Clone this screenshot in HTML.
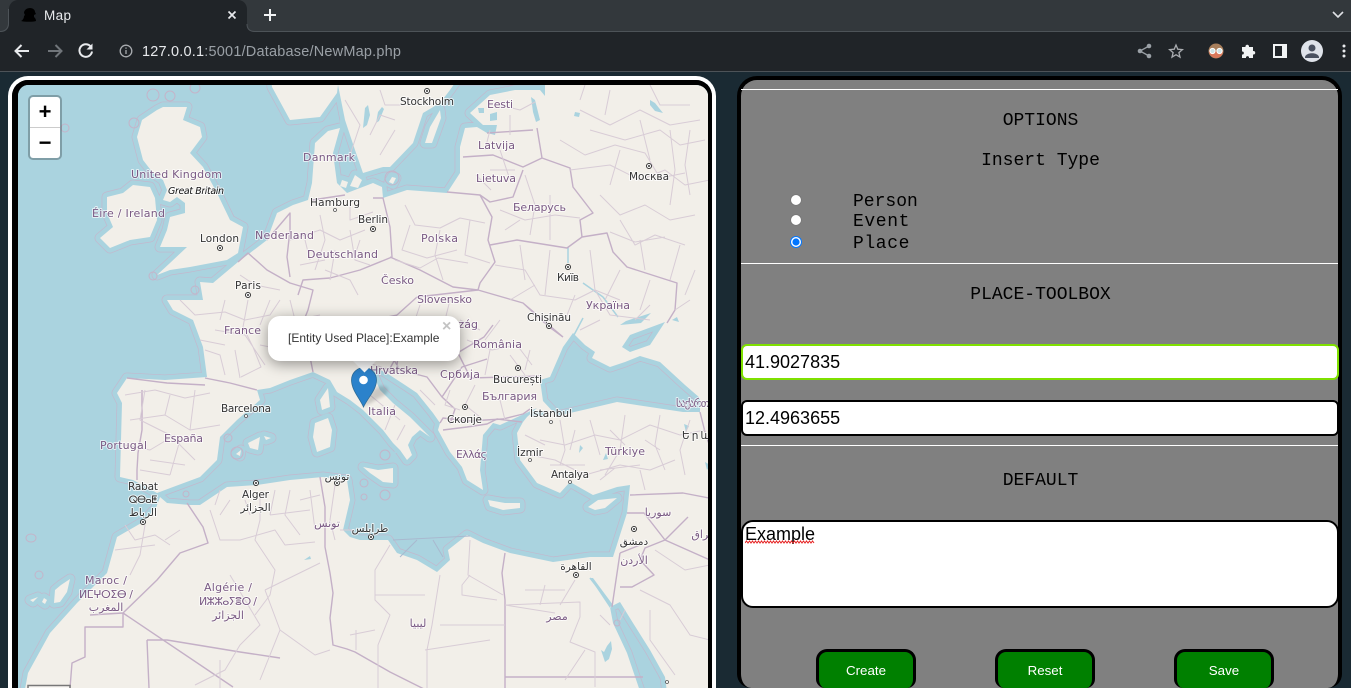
<!DOCTYPE html>
<html lang="en"><head><meta charset="utf-8"><title>Map</title>
<style>
html,body{margin:0;padding:0;width:1351px;height:688px;overflow:hidden;background:#1a2a33;font-family:"Liberation Sans",sans-serif}
#root{position:relative;width:1351px;height:688px;overflow:hidden;background:#1a2a33}
.abs{position:absolute}
#chrome{position:absolute;left:0;top:0;width:1351px;height:72px}
#mapwrap{position:absolute;left:8px;top:76px;width:700px;height:608px;border:4px solid #fff;border-bottom:0;border-radius:20px 20px 0 0;box-sizing:content-box}
#mapin{position:absolute;left:0;top:0;width:690px;height:603px;border:4px solid #000;border-bottom:0;border-top-width:5px;border-left-width:6px;border-radius:16px 16px 0 0;overflow:hidden;background:#aad3df}
#mapin svg{position:absolute;left:0;top:0;display:block}
.c{font:11px "DejaVu Sans",sans-serif;fill:#7a5a84;text-anchor:middle;paint-order:stroke;stroke:rgba(255,255,255,.65);stroke-width:2px;stroke-linejoin:round}
.p{font:10.5px "DejaVu Sans",sans-serif;fill:#333;text-anchor:middle;paint-order:stroke;stroke:rgba(255,255,255,.75);stroke-width:2px;stroke-linejoin:round}
.land{fill:#f2efe9;fill-rule:evenodd}
.b{fill:none;stroke:#c4b0c7;stroke-width:1.4;stroke-linejoin:round}
.a{fill:none;stroke:#d8ccd6;stroke-width:1;stroke-linejoin:round}
.m{fill:none;stroke:#a9b9cf;stroke-width:1}
.w{fill:#aad3df}
.rv{fill:none;stroke:#aad3df;stroke-width:1.5}
.r{fill:none;stroke:#c4b4c9;stroke-width:1}
#zoom{position:absolute;left:28px;top:95px;width:30px;height:61px;border:2px solid rgba(0,0,0,.25);border-radius:5px;background:#fff;background-clip:padding-box}
#zoom div{width:30px;height:30px;text-align:center;font:bold 22px/30px "Liberation Sans",sans-serif;color:#000}
#zoom div:first-child{border-bottom:1px solid #ccc}
#popup{position:absolute;left:268px;top:316px;width:192px;height:45px;background:#fff;border-radius:12px;box-shadow:0 3px 14px rgba(0,0,0,.4);font:12px/1.4 "Liberation Sans",sans-serif;color:#333}
#popup span{position:absolute;left:20px;top:14px;white-space:nowrap}
#popup b{position:absolute;left:174px;top:3px;font:16px/16px "Liberation Sans",sans-serif;color:#c3c3c3;font-weight:bold}
#tip{position:absolute;left:351px;top:361px;width:26px;height:13px;overflow:hidden}
#tip i{display:block;width:17px;height:17px;background:#fff;transform:rotate(45deg);margin:-9px 0 0 4.5px}
#panel{position:absolute;left:737px;top:76px;width:597px;height:608px;border:4px solid #000;border-bottom:0;border-radius:20px 20px 14px 14px;background:#808080}
.hr{position:absolute;left:741px;width:597px;height:1px;background:#fff}
.t{position:absolute;font:18px/20px "Liberation Mono",monospace;color:#000;white-space:pre}
.ctr{left:742px;width:597px;text-align:center}
input[type=radio]{position:absolute;margin:0;width:12px;height:12px;left:790px}
input[type=text]{position:absolute;left:741px;width:598px;height:36px;box-sizing:border-box;border:2px solid #000;border-radius:6px;background:#fff;font:18px "Liberation Sans",sans-serif;color:#000;padding:0 2px;outline:0}
textarea{position:absolute;left:741px;top:520px;width:598px;height:88px;box-sizing:border-box;border:2px solid #000;border-radius:12px;background:#fff;font:18px/20px "Liberation Sans",sans-serif;color:#000;padding:2px 2px;resize:none;outline:0;overflow:hidden;margin:0}
button{position:absolute;top:649px;width:100px;height:39px;box-sizing:border-box;border:3.5px solid #000;border-bottom:0;border-radius:11px 11px 9px 9px;background:#008000;color:#fff;font:13.33px "Liberation Sans",sans-serif;padding:0}
</style></head><body>
<div id="root">
<svg id="chrome" width="1351" height="72" viewBox="0 0 1351 72">
<rect width="1351" height="32" fill="#33383c"/>
<rect y="32" width="1351" height="39" fill="#202428"/>
<rect y="71" width="1351" height="1" fill="#4d5358"/>
<path d="M0 32h1c5 0 8-3 8-8V9c0-5 4-9 9-9h220c5 0 9 4 9 9v15c0 5 3 8 8 8h1v1H0z" fill="#202428"/>
<path d="M0 31.500c5 0 8.500-3 8.500-8V9" fill="none" stroke="#4d5358" stroke-width="1"/>
<path d="M247 24c0 5 3 7.500 8 7.500H1351" fill="none" stroke="#4d5358" stroke-width="1"/>
<path d="M21 21c2-1 3-3 3-5l1-1-1-2c0-3 3-5 6-5 3 0 5 2 5 4l1 2-2 1v2c1 1 2 2 2 4-3 1-11 1-15 0z" fill="#000"/>
<text x="44" y="20" font-family="'Liberation Sans',sans-serif" font-size="13.500" fill="#e8eaed" textLength="27">Map</text>
<path d="M228.500 11.500l7 7m0-7l-7 7" stroke="#e8eaed" stroke-width="1.700" fill="none"/>
<path d="M270 9v12M264 15h12" stroke="#f1f3f4" stroke-width="2" fill="none"/>
<path d="M1333 12l5 5 5-5" stroke="#dfe1e5" stroke-width="1.600" fill="none"/>
<path d="M29 51H16M21.500 45l-6 6 6 6" stroke="#e8eaed" stroke-width="2" fill="none"/>
<path d="M61 51H48M55.500 45l6 6-6 6" stroke="#70757a" stroke-width="2" fill="none"/>
<path d="M91 47a6.300 6.300 0 1 0 1 4.500" stroke="#e8eaed" stroke-width="2" fill="none"/><path d="M92.500 43.500v6h-6z" fill="#e8eaed"/>
<circle cx="126" cy="51" r="5.800" fill="none" stroke="#a9acb0" stroke-width="1.300"/><path d="M126 50v4M126 47.500v1.300" stroke="#a9acb0" stroke-width="1.300"/>
<text x="142" y="56" font-family="'Liberation Sans',sans-serif" font-size="14.500" textLength="259" lengthAdjust="spacing"><tspan fill="#e8eaed">127.0.0.1</tspan><tspan fill="#9aa0a6">:5001/Database/NewMap.php</tspan></text>
<g fill="#9aa0a6"><circle cx="1149" cy="46" r="2.300"/><circle cx="1149" cy="56" r="2.300"/><circle cx="1140" cy="51" r="2.300"/></g><path d="M1149 46l-9 5 9 5" stroke="#9aa0a6" stroke-width="1.300" fill="none"/>
<path d="M1176 45l1.800 4.200 4.600.4-3.500 3 1.100 4.500-4-2.400-4 2.400 1.100-4.500-3.500-3 4.600-.4z" fill="none" stroke="#a9acb0" stroke-width="1.300"/>
<circle cx="1216" cy="51" r="7.500" fill="#a87f5c"/><path d="M1209 51a7 7 0 0 0 14 0z" fill="#d9775a"/><circle cx="1212.500" cy="51" r="2.600" fill="#cfe3e6" stroke="#fff"/><circle cx="1219.500" cy="51" r="2.600" fill="#cfe3e6" stroke="#fff"/>
<path d="M1242 47h3.500c-.5-3 4-3 3.500 0h4v4c3-.5 3 4 0 3.500V58h-4c.5-2.500-3.500-2.500-3 0h-4v-3.500c2.500.5 2.500-3.500 0-3z" fill="#f1f3f4"/>
<rect x="1273" y="44" width="14" height="14" fill="#f1f3f4"/><rect x="1275" y="46" width="7" height="10" fill="#202428"/>
<circle cx="1312" cy="51" r="11" fill="#dfe3ea"/><circle cx="1312" cy="48" r="3.500" fill="#4a5160"/><path d="M1305 57c1-5 13-5 14 0v1h-14z" fill="#4a5160"/>
<g fill="#e8eaed"><circle cx="1344" cy="46" r="1.500"/><circle cx="1344" cy="51" r="1.500"/><circle cx="1344" cy="56" r="1.500"/></g>
</svg>

<div id="mapwrap"><div id="mapin">
<svg width="690" height="603" viewBox="18 85 690 603" xmlns="http://www.w3.org/2000/svg">
<defs>
<path id="L" d="M720 700L23 700 28 673 50 633 77 603 107 573 117 537 143 522 156 508 160 497 167 503 190 505 200 505 227 487 257 485 290 480 323 477 347 480 350 500 343 530 350 537 360 540 388 540 397 553 417 560 437 572 450 560 448 550 467 535 483 543 510 553 553 562 590 557 613 557 627 513 630 485 617 487 593 495 570 482 560 493 537 483 520 460 517 433 523 422 527 417 537 408 500 425 493 423 483 435 480 470 483 490 467 480 462 467 450 452 438 430 440 423 433 413 417 393 405 385 385 372 375 368 372 372 380 390 393 403 410 417 430 437 420 430 412 437 408 445 412 455 407 460 400 450 393 443 383 430 370 417 363 410 350 400 337 392 330 380 313 372 290 380 270 388 257 390 260 400 237 420 220 437 217 460 200 477 173 487 157 493 133 480 120 477 121 440 122 403 117 393 127 378 165 380 207 377 203 347 193 320 173 310 167 300 203 300 200 282 213 283 238 262 250 253 267 240 277 213 293 205 308 200 312 183 315 143 328 131 340 128 333 153 337 183 347 193 373 183 382 187 383 198 407 190 447 193 460 173 460 147 465 128 477 127 487 133 495 135 497 125 483 125 470 113 490 95 515 90 540 90 545 96 545 80 457 80 450 90 440 103 423 113 413 143 390 167 383 167 363 173 355 150 345 120 338 85 337 93 320 117 290 120 272 87 270 70 720 70Z
M163 107L187 107 183 120 200 127 202 137 190 153 203 167 217 193 230 220 243 227 238 253 227 260 190 267 170 270 157 275 170 263 187 247 160 247 167 230 170 217 185 213 185 203 177 197 170 202 163 200 167 190 163 180 153 173 143 160 137 137 142 120 157 110Z
M133 185L150 187 155 198 157 220 150 237 130 240 110 248 100 238 113 227 107 213 107 197 123 193Z
M315 423L328 418 332 430 330 447 317 452 313 437Z M320 400L328 388 330 407 322 410Z
M363 467L378 470 393 468 393 483 383 482 370 473Z
M488 500L505 503 520 503 520 508 503 510 490 506Z M588 507L598 500 617 498 605 508 595 510Z
M248 443L260 437 258 450 250 448Z M264 436L271 438 266 440Z M236 454L241 450 240 456Z
M430 127L440 110 441 118 432 143 425 143Z M392 177L396 178 393 184 389 182Z
M355 175L362 180 358 188 350 186Z M342 180L348 182 346 188 340 186Z
M55 590L61 585 70 579 67 592 60 602 54 603Z M30 600L38 597 33 602Z M44 598L47 600 45 604 42 602Z
M490 114L497 112 497 120 490 121Z M478 108L484 108 484 113 479 113Z
M543 401L540 380 550 377 563 347 573 333 585 345 595 352 592 358 610 367 625 362 640 356 660 362 685 385 700 398 700 412 683 412 650 407 617 402 583 410 557 416Z
M622 347L630 335 665 322 650 345 630 352Z
M610 607L620 602 633 623 650 650 665 677 668 700 643 700 627 653 613 623Z M590 578L593 578 613 605 610 608Z
M530 411L545 411 543 416 530 416Z"/>
</defs>
<rect x="0" y="0" width="800" height="800" fill="#aad3df"/>
<use href="#L" fill="none" stroke="#c2b8cd" stroke-width="10.800" stroke-linejoin="round"/>
<use href="#L" fill="none" stroke="#aad3df" stroke-width="9.400" stroke-linejoin="round"/>
<use href="#L" class="land"/>
<g class="r"><circle cx="153" cy="95" r="6"/><circle cx="170" cy="96" r="5"/><circle cx="134" cy="123" r="5"/><circle cx="65" cy="128" r="4"/><circle cx="195" cy="88" r="5"/><circle cx="153" cy="276" r="4"/><circle cx="195" cy="290" r="4"/><ellipse cx="31" cy="538" rx="5" ry="4"/><circle cx="39" cy="575" r="4"/><circle cx="186" cy="494" r="3"/><circle cx="228" cy="438" r="4"/><circle cx="237" cy="453" r="6"/><circle cx="385" cy="455" r="5"/><circle cx="364" cy="483" r="4"/><circle cx="364" cy="497" r="3"/><circle cx="385" cy="495" r="5"/><circle cx="617" cy="623" r="3"/><circle cx="392" cy="178" r="7"/></g>
<path class="m" d="M393 540L470 536M400 557L417 540M433 540L443 557"/>
<g class="w">
<path d="M365 108l3-3 2 10-3 10-4 3zM378 112l4-5 2 2-5 12-3 2zM531 97l4 3 5 20-4 2-3-10z M650 100l5 3 8 10-8-2-5-6z M575 112l5 1-1 4-5-1z M601 650l3 2 3-6 4-5 1 8-3 10-4 3-2-6z M340 120l3 2 0 5-3 1zM580 445l3 3-4 5zM606 453l-3 7 5-1zM684 424l5 2-3 6zM705 462l5 3-3 5zM304 560l6-4 1 3zM396 448l-2 5 4 0z M620 325l6-4 25-8-10 10zM672 320l5-3 2 5zM520 380l-3 2 2 2z"/>
</g>
<path class="rv" d="M568 247V263M583 283L603 297M603 297L618 317M574 335L583 318M590 578L612 606"/>
<!-- national borders -->
<g class="b">
<path d="M238 262l10-9 19 17 23 13 23 7-5 20-6 15M267 240l23-27 0 17-3 27 3 20"/>
<path d="M312 200l33-5M373 198l10 0 7 29 2 30-32 13-30 8-27 2-5 15M390 257l30 13 33 17 25 3M447 192l33 3 12 22-4 23 7 22-15 21-2 7"/>
<path d="M463 157l30-2 30 12 19-9-5-30M487 133l46-3M480 195l10 7 23-5 10-27M542 158l28 10 3 19 20 26-13 7 2 17M490 245l27-5 50 8 15-11 25-4 6 19 14 15 50 16-2 27-8 13"/>
<path d="M478 290l45 13 40 34M523 303l25 23 15 11M417 297l61-7M417 297l-20 18-8 5-25 2-20 5M364 322l33-7M345 340l40 5 17 5 30-3 27 5 25-15 9-12M385 345l15 25 27 7 15 20 13 12-5 15M440 423l3-5 25 3 35-2 20-5 7-5M470 378l72-2M442 397l20-30 25-8M455 347l15 30M388 372l12-22M400 340l-3 25"/>
<path d="M302 345l8 12 3 15M310 345l35-5M280 335l20 5 8-5 20-12M300 320l15 5 30-3"/>
<path d="M127 378l40 5 38 2M205 378l25 5 27 7M142 390l0 40-4 23-1 17 0 10"/>
<path d="M187 503l16 24 5 16-28 10-23 27-34 33 110 74M123 613l0 14-38 0 0 30-13 6-2 25M90 615l33-2M147 640l2 48M147 640l20 0 73 12 40 6M320 477l5 30 0 40 5 26 3 20-3 25 3 27 14 4 8 3 35 20 60 30M505 553l-3 20 3 27 0 100M505 677l138 0M620 553l-8 54"/>
<path d="M630 495l53-2 26 5M688 517l-23 23-20 8-5 12 14 15-22 12 -12 0M627 513l17 0 21 27M640 545l-20 8M665 540l45 20M700 412l5 20 5 15"/>
<path d="M443 430l24-3 20-3 10-5 25 3"/>
</g>
<!-- admin -->
<g class="a">
<path d="M180 300l15 15 30-3 20 8 25-5 10-15M248 300l-5 27 10 20 8 20-20 10M215 330l30 5 20 30M200 340l25 5M240 275l15 10 25 5M270 300l-10 25M290 240l30-10 20 10 25-10M320 215l5 25-10 30M350 230l5 30 15 5M325 270l25 10 8 15M350 205l0 15 23-8"/>
<path d="M205 350l15 5 5 20M225 300l-5 20M260 345l25 5M235 350l5 28M290 300l5 20 25 -5M305 240l5 20M335 250l-5 30M300 265l25 -5M360 240l-5 15M345 100l15 25 -10 30M370 135l10-20 15 5M395 130l-15 25M380 90l5 15 20 0"/>
<path d="M405 205l10 20 25 3 20-10 25 5M410 225l-8 25 25 8 30-8M440 230l-5 25 8 25M470 220l-5 35 25 8M395 260l25 8 18 -10 30 5"/>
<path d="M500 210l25 10 30-5 25 3M525 175l10 30-5 30M550 195l0 45M505 230l15-10M490 170l25 0M476 175l15 15M485 150l5 -20M500 150l10 30M500 105l20 5 15 -8M510 135l0-20"/>
<path d="M580 110l30 15 30-15 30 15 30-5M590 130l35 10 35-10 20 15 25-5M560 140l25 15 30-10 30 8 15 25 25-5M570 170l40-5 30 15 25-10 20 15 25-5M600 195l20 20 25-10 25 15 25-5M620 220l15 25 20-10 30 10M610 232l25 10 30-5M580 100l5-15M640 120l10 40M670 130l5 40 -5 35M620 150l-10 35M650 85l10 20 30 0M690 130l-5 35 5 30M640 240l5 30M680 245l-10 35M610 90l-5 25M695 270l-10 25M690 300l-15 10"/>
<path d="M495 265l30 5 15 25 35 5 20-10 15 25 40 5M520 245l5 35M550 250l-5 45M590 250l5 40 25 10M620 270l-15 30M650 280l-10 30M510 300l25-15M575 295l-10 25M600 320l-20 10M650 305l-15 15"/>
<path d="M467 340l25 10 25-5 15 20M490 350l-5 25M510 355l15 20M530 350l-5 20M460 320l20 10M500 320l-15 20M400 320l20 5 10 15M420 305l-5 15M450 300l-5 20"/>
<path d="M360 360l30 10M355 355l-10 -5M370 395l30 25M395 405l-10 25M405 425l-8 15M420 390l15 15M450 390l-5 15 15 5M475 385l-10 20 15 12M500 400l5 20"/>
<path d="M125 395l30-5 30 8 25-5M130 420l35-5 25 15 30-5M125 445l25 5 25-15M145 390l-5 30 30 15 25 25M165 415l5 -20M190 430l5 -40M150 460l35 5M180 440l-10 35M140 470l30 5"/>
<path d="M540 440l25 5 30-10 25 5 30-15 30 10 25-5M530 455l25 5 30 15 35-10 30 5 25-10M560 420l5 30 -5 15M590 420l10 35M625 415l-5 35 -15 25M660 415l-5 30 10 25M690 420l-10 30 5 25M550 465l35 0M600 470l40-5M525 435l20 10M575 430l-5 20M610 430l15 15M645 440l15 10M600 480l15-12M640 470l5 20"/>
<path d="M210 510l10 30 20 0 35-10 10 15 30-3M230 500l-10 15M260 495l0 25 -5 20 20 30-5 25 -15 20M290 490l-5 25 15 20M310 490l5 40M270 515l40-5M335 485l-5 35 5 20M340 530l15 0M245 500l5 15M275 490l-5 25M300 500l20 -5M220 490l-5 15"/>
<path d="M125 525l10 15 20-5 15 10M145 525l-5 30-10 20M165 540l15-10M115 550l40 -5M230 575l30 50-20 20-15 25-30 15M265 590l55-27M265 590l15 40 35 25 15 -5M220 700l0-40M280 630l-20 50"/>
<path d="M390 545l-15 25 0 30 15 15-12 30 0 50M440 575l-8 50 -5 25 0 60M375 595l50 0M350 635l25-5M470 540l-2 35 35 20M470 575l-8 10 0 10 35 5M440 625l65 0M425 650l65-10M356 650l0 -20"/>
<path d="M505 605l75-3 0 15 -10 25 25 10 0 35M505 605l50 8M540 605l5 -20M525 590l40 0M575 580l-15 25M585 650l-20 30M600 615l10 10M625 610l-5 10M640 590l30 15 20 30 20 5M650 610l0 30 25 35M655 550l30 20 25 -5"/>
</g>
<!-- city dots -->
<g fill="#fff" stroke="#333" stroke-width="1"><circle cx="427" cy="91" r="2.500"/><circle cx="373" cy="229" r="2.500"/><circle cx="220" cy="248" r="2.500"/><circle cx="248" cy="295" r="2.500"/><circle cx="649" cy="166" r="2.500"/><circle cx="568" cy="267" r="2.500"/><circle cx="549" cy="326" r="2.500"/><circle cx="518" cy="368" r="2.500"/><circle cx="465" cy="407" r="2.500"/><circle cx="143" cy="522" r="2.500"/><circle cx="256" cy="483" r="2.500"/><circle cx="337" cy="483" r="2.500"/><circle cx="371" cy="537" r="2.500"/><circle cx="634" cy="529" r="2.500"/><circle cx="576" cy="575" r="2.500"/></g>
<g fill="#333"><circle cx="427" cy="91" r="1"/><circle cx="373" cy="229" r="1"/><circle cx="220" cy="248" r="1"/><circle cx="248" cy="295" r="1"/><circle cx="649" cy="166" r="1"/><circle cx="568" cy="267" r="1"/><circle cx="549" cy="326" r="1"/><circle cx="518" cy="368" r="1"/><circle cx="465" cy="407" r="1"/><circle cx="143" cy="522" r="1"/><circle cx="256" cy="483" r="1"/><circle cx="337" cy="483" r="1"/><circle cx="371" cy="537" r="1"/><circle cx="634" cy="529" r="1"/><circle cx="576" cy="575" r="1"/></g>
<g fill="#fff" stroke="#555" stroke-width=".8"><circle cx="335" cy="210" r="1.500"/><circle cx="246" cy="416" r="1.500"/><circle cx="551" cy="422" r="1.500"/><circle cx="530" cy="460" r="1.500"/><circle cx="570" cy="482" r="1.500"/><circle cx="667" cy="682" r="1.500"/></g>
<!-- country labels -->
<g>
<text class="c" x="176.500" y="178" textLength="91">United Kingdom</text>
<text class="c" x="128.500" y="217" textLength="73">Éire / Ireland</text>
<text class="c" x="329" y="161" textLength="52">Danmark</text>
<text class="c" x="284.500" y="239" textLength="59">Nederland</text>
<text class="c" x="342.500" y="258" textLength="71">Deutschland</text>
<text class="c" x="242.500" y="334" textLength="37">France</text>
<text class="c" x="500" y="108" textLength="26">Eesti</text>
<text class="c" x="496.500" y="149" textLength="37">Latvija</text>
<text class="c" x="496" y="182" textLength="40">Lietuva</text>
<text class="c" x="539.500" y="211" textLength="53">Беларусь</text>
<text class="c" x="439.500" y="242" textLength="37">Polska</text>
<text class="c" x="397.500" y="284" textLength="33">Česko</text>
<text class="c" x="444.500" y="303" textLength="55">Slovensko</text>
<text class="c" x="608" y="309" textLength="44">Україна</text>
<text class="c" x="497.500" y="348" textLength="49">România</text>
<text class="c" x="439" y="328" textLength="78">Magyarország</text>
<text class="c" x="394" y="374" textLength="48">Hrvatska</text>
<text class="c" x="460" y="378" textLength="40">Србија</text>
<text class="c" x="382" y="415" textLength="28">Italia</text>
<text class="c" x="509.500" y="400" textLength="55">България</text>
<text class="c" x="471.500" y="458" textLength="31">Ελλάς</text>
<text class="c" x="625" y="455" textLength="40">Türkiye</text>
<text class="c" x="183.500" y="442" textLength="39">España</text>
<text class="c" x="123.500" y="449" textLength="47">Portugal</text>
<text class="c" x="106" y="584" textLength="42">Maroc /</text>
<text class="c" x="106" y="598" textLength="54">ⵍⵎⵖⵔⵉⴱ /</text>
<text class="c" x="106" y="611">المغرب</text>
<text class="c" x="228" y="591" textLength="48">Algérie /</text>
<text class="c" x="228" y="605" textLength="58">ⵍⵣⵣⴰⵢⴻⵔ /</text>
<text class="c" x="228" y="619">الجزائر</text>
<text class="c" x="327" y="527">تونس</text>
<text class="c" x="658" y="516">سوريا</text>
<text class="c" x="418" y="627">ليبيا</text>
<text class="c" x="557" y="620">مصر</text>
<text class="c" x="634" y="564">الأردن</text>
<text class="c" x="706" y="538">العراق</text>
<text class="c" x="706" y="407" textLength="60">საქართველო</text>
</g>
<g>
<text class="p" x="427" y="105" textLength="54">Stockholm</text>
<text class="p" x="335" y="206" textLength="50">Hamburg</text>
<text class="p" x="373" y="223" textLength="30">Berlin</text>
<text class="p" x="219.500" y="242" textLength="39">London</text>
<text class="p" x="248" y="289" textLength="26">Paris</text>
<text class="p" x="649" y="180" textLength="40">Москва</text>
<text class="p" x="568" y="281" textLength="22">Київ</text>
<text class="p" x="549" y="321" textLength="44">Chișinău</text>
<text class="p" x="517.500" y="383" textLength="49">București</text>
<text class="p" x="246" y="412" textLength="50">Barcelona</text>
<text class="p" x="464.500" y="423" textLength="35">Скопје</text>
<text class="p" x="551" y="417" textLength="42">İstanbul</text>
<text class="p" x="530" y="456" textLength="26">İzmir</text>
<text class="p" x="570" y="478" textLength="38">Antalya</text>
<text class="p" x="143" y="490" textLength="30">Rabat</text>
<text class="p" x="143" y="503" textLength="29">ⵕⴱⴰⵟ</text>
<text class="p" x="143" y="516">الرباط</text>
<text class="p" x="255.500" y="498" textLength="27">Alger</text>
<text class="p" x="255.500" y="511">الجزائر</text>
<text class="p" x="337" y="480">تونس</text>
<text class="p" x="370" y="532">طرابلس</text>
<text class="p" x="634" y="545">دمشق</text>
<text class="p" x="576" y="570">القاهرة</text>
<text class="p" x="706" y="439" textLength="48">Երևան</text>
<text x="196" y="194" text-anchor="middle" font-family="'DejaVu Sans',sans-serif" font-style="italic" font-size="9.500" fill="#111" textLength="56" style="paint-order:stroke;stroke:rgba(255,255,255,.7);stroke-width:2px">Great Britain</text>
</g>
<path d="M28 688v-2.500h42v2.500" fill="rgba(255,255,255,.5)" stroke="#777" stroke-width="1.500"/>
<!-- marker shadow -->
<path d="M363 407l22-12c5-4 3-9-3-9-8 0-12 8-19 21z" fill="#000" opacity=".16" style="filter:blur(1.5px)"/>
<!-- marker -->
<path d="M363.500 407c-4-9-12-17-12-27a12.500 12.500 0 0 1 25 0c0 10-9 18-13 27z" fill="#2b82cb" stroke="#2e6c97" stroke-width=".8"/>
<circle cx="363.500" cy="380" r="4.300" fill="#fff"/>
</svg>
</div></div>

<div id="zoom"><div>+</div><div>−</div></div>
<div id="tip"><i></i></div>
<div id="popup"><span>[Entity Used Place]:Example</span><b>×</b></div>

<div id="panel"></div>
<div class="hr" style="top:89px"></div>
<div class="hr" style="top:263px"></div>
<div class="hr" style="top:445px"></div>

<div class="t ctr" style="top:111px">OPTIONS</div>
<div class="t ctr" style="top:151px">Insert Type</div>
<input type="radio" name="k" style="top:194px">
<input type="radio" name="k" style="top:214px">
<input type="radio" name="k" checked style="top:236px">
<div class="t" style="left:853px;top:192px">Person</div>
<div class="t" style="left:853px;top:212px;letter-spacing:.6px">Event</div>
<div class="t" style="left:853px;top:234px;letter-spacing:.6px">Place</div>
<div class="t ctr" style="top:285px">PLACE-TOOLBOX</div>
<input type="text" value="41.9027835" style="top:344px;border-color:#7fe000">
<input type="text" value="12.4963655" style="top:400px">
<div class="t ctr" style="top:471px">DEFAULT</div>
<textarea spellcheck="false">Example</textarea>
<svg class="abs" style="left:745px;top:540px" width="71" height="4"><path d="M0 3l1.500-2 1.500 2 1.500-2 1.500 2 1.500-2 1.500 2 1.500-2 1.500 2 1.500-2 1.500 2 1.500-2 1.500 2 1.500-2 1.500 2 1.500-2 1.500 2 1.500-2 1.500 2 1.500-2 1.500 2 1.500-2 1.500 2 1.500-2 1.500 2 1.500-2 1.500 2 1.500-2 1.500 2 1.500-2 1.500 2 1.500-2 1.500 2 1.500-2 1.500 2 1.500-2 1.500 2 1.500-2 1.500 2 1.500-2 1.500 2 1.500-2 1.500 2 1.500-2 1.500 2 1.500-2 1.500 2" fill="none" stroke="#e52222" stroke-width="1"/></svg>
<button style="left:816px">Create</button>
<button style="left:995px">Reset</button>
<button style="left:1174px">Save</button>
</div>
</body></html>
